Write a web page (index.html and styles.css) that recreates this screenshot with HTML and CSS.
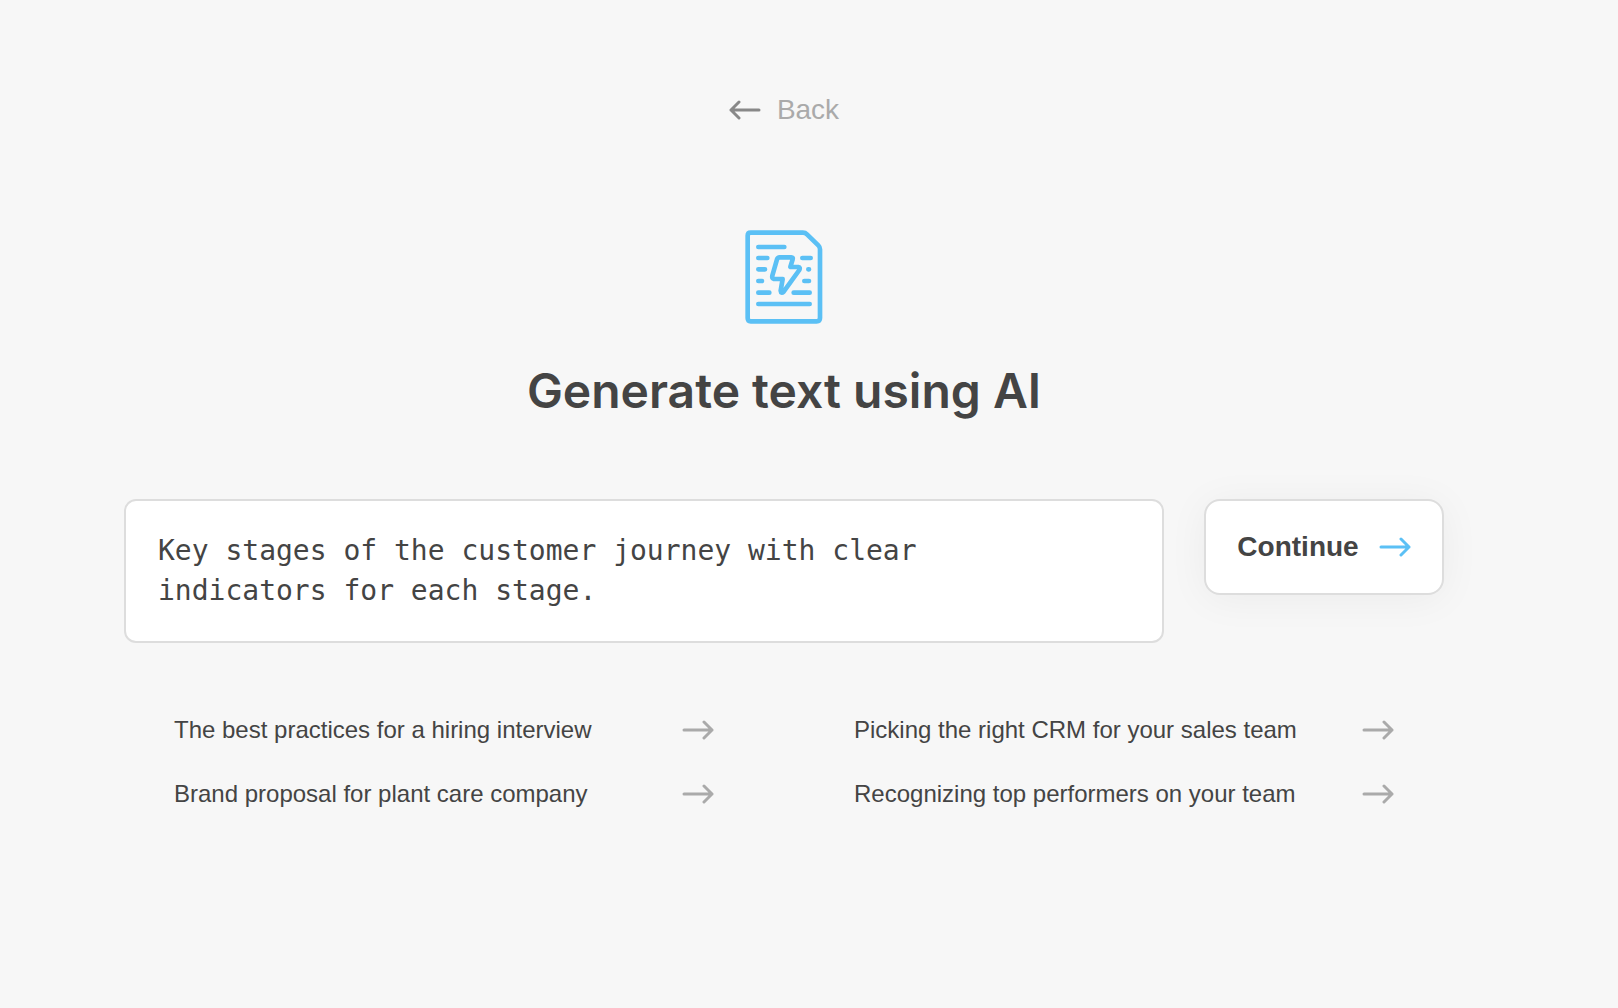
FILE: index.html
```
<!DOCTYPE html>
<html lang="en">
<head>
    <meta charset="UTF-8">
    <meta name="viewport" content="width=device-width, initial-scale=1.0">
    <title>Generate text using AI</title>
    <link rel="stylesheet" href="styles.css">
</head>
<body>
    <!-- Arrow shared by all the links and buttons -->
    <svg class="sprite" aria-hidden="true">
        <symbol id="arrow" viewBox="0 0 32 20">
            <path d="M2 10h28M22 2l8 8-8 8"/>
        </symbol>
    </svg>

    <main class="page">
        <a href="#" class="back">
            <svg class="arrow arrow-left"><use href="#arrow"/></svg>
            Back
        </a>

        <svg class="doc-icon" viewBox="0 0 234 282" aria-hidden="true">
            <path d="M17 8H174Q181 8 186 13L220 46Q225 51 225 58V264Q225 274 215 274H17Q8 274 8 264V17Q8 8 17 8Z"/>
            <path d="M40 51H118M40 84H67M40 118H60M40 153H51M40 188H73M40 222H194"/>
            <path d="M172 84H197M190 118H192M178 153H192M146 188H194"/>
            <path d="M104 82H139Q145 82 143 88L136 111H160Q167 112 163 120L116 185Q108 192 107 182L113 147H87Q80 145 82 137L96 88Q98 82 104 82Z"/>
        </svg>

        <h1>Generate text using AI</h1>

        <form class="prompt">
            <textarea class="prompt-input" rows="2" aria-label="Prompt" spellcheck="false">Key stages of the customer journey with clear indicators for each stage.</textarea>
            <button type="button" class="continue">
                Continue
                <svg class="arrow"><use href="#arrow"/></svg>
            </button>
        </form>

        <nav class="suggestions">
            <a href="#">The best practices for a hiring interview <svg class="arrow"><use href="#arrow"/></svg></a>
            <a href="#">Picking the right CRM for your sales team <svg class="arrow"><use href="#arrow"/></svg></a>
            <a href="#">Brand proposal for plant care company <svg class="arrow"><use href="#arrow"/></svg></a>
            <a href="#">Recognizing top performers on your team <svg class="arrow"><use href="#arrow"/></svg></a>
        </nav>
    </main>
</body>
</html>
```

FILE: styles.css
```
* {
    box-sizing: border-box;
    margin: 0;
    padding: 0;
}

body {
    font-family: "Liberation Sans", Arial, sans-serif;
    background-color: #f7f7f7;
    color: #444;
}

a {
    color: inherit;
    text-decoration: none;
}

.sprite {
    display: none;
}

.page {
    display: flex;
    flex-direction: column;
    align-items: center;
    padding: 94px 174px 40px 124px;
}

.arrow {
    width: 32px;
    height: 20px;
    flex-shrink: 0;
    fill: none;
    stroke: #aaa;
    stroke-width: 3;
    stroke-linecap: round;
    stroke-linejoin: round;
}

.arrow-left {
    stroke: #888;
    transform: rotate(180deg);
}

.back {
    display: flex;
    align-items: center;
    gap: 16px;
    font-size: 28px;
    line-height: 32px;
    color: #aaa;
}

.doc-icon {
    width: 78px;
    height: 94px;
    margin-top: 104px;
    fill: none;
    stroke: #5bc0f5;
    stroke-width: 14;
    stroke-linecap: round;
    stroke-linejoin: round;
}

h1 {
    margin-top: 37px;
    font-family: Inter, sans-serif;
    font-size: 48px;
    font-weight: 600;
    line-height: 60px;
}

.prompt {
    display: flex;
    align-items: flex-start;
    gap: 40px;
    width: 100%;
    margin-top: 78px;
}

.prompt-input {
    flex: 1;
    min-width: 0;
    padding: 30px 96px 30px 32px;
    border: 2px solid #ddd;
    border-radius: 12px;
    background-color: #fff;
    color: #444;
    font-family: "DejaVu Sans Mono", monospace;
    font-size: 28px;
    line-height: 40px;
    resize: none;
    overflow: hidden;
}

.continue {
    display: flex;
    align-items: center;
    justify-content: center;
    gap: 20px;
    min-width: 240px;
    padding: 30px;
    border: 2px solid #ddd;
    border-radius: 16px;
    background-color: #fff;
    box-shadow: 0 4px 40px rgba(0, 0, 0, 0.05);
    color: #444;
    font-family: inherit;
    font-size: 28px;
    font-weight: bold;
    line-height: 32px;
    cursor: pointer;
}

.continue .arrow {
    stroke: #5bc0f5;
}

.suggestions {
    display: grid;
    grid-template-columns: 1fr 1fr;
    gap: 32px 140px;
    width: 100%;
    margin-top: 71px;
    padding: 0 50px;
}

.suggestions a {
    display: flex;
    align-items: center;
    justify-content: space-between;
    font-size: 24px;
    line-height: 32px;
}
```
